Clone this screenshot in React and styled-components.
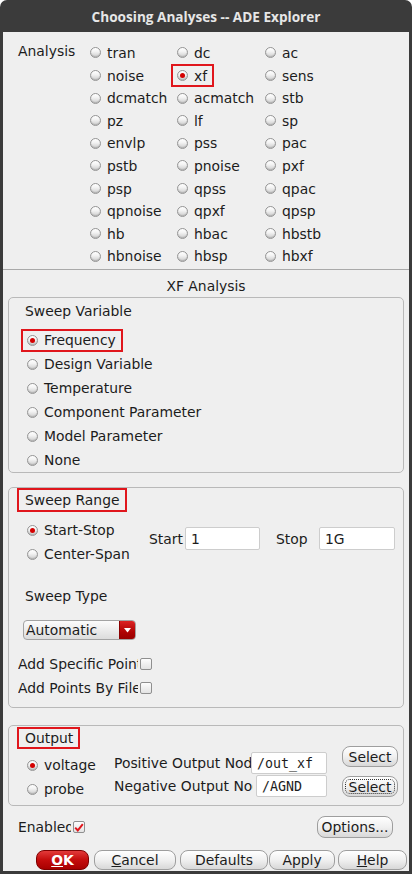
import React from "react";
import styled, { createGlobalStyle } from "styled-components";

const GlobalStyle = createGlobalStyle`
  html, body { margin: 0; padding: 0; background: #ffffff; }
  body { font-family: "DejaVu Sans", "Liberation Sans", sans-serif; }
  *, *::before, *::after { box-sizing: border-box; }
`;

const RED = "#e0161c";

const Window = styled.div`
  width: 412px;
  height: 874px;
  background: #3b3b3b;
  border-radius: 7px 7px 0 0;
  padding: 0 3px 3px 3px;
  display: flex;
  flex-direction: column;
`;

const TitleBar = styled.div`
  height: 32px;
  flex: none;
  display: flex;
  align-items: center;
  justify-content: center;
  padding-top: 1px;
  color: #e6e6e6;
  font-family: "Open Sans", "DejaVu Sans", sans-serif;
  font-weight: 700;
  font-size: 13.6px;
`;

const Body = styled.div`
  flex: 1;
  background: #efefef;
  display: flex;
  flex-direction: column;
  color: #1c1c1c;
  font-size: 13.9px;
`;

const AnalysisSection = styled.div`
  flex: none;
  height: 237px;
  display: flex;
  padding: 9.7px 0 0 15px;
`;

const SideLabel = styled.div`
  width: 66px;
  line-height: 22.6px;
  margin-top: -2px;
`;

const AnalysisGrid = styled.div`
  display: grid;
  grid-template-columns: 87px 88px 1fr;
  grid-auto-rows: 22.6px;
  align-items: center;
`;

const Separator = styled.div`
  flex: none;
  height: 1px;
  background: #a9a9a9;
`;

const SectionHeader = styled.div`
  flex: none;
  height: 27px;
  padding-top: 6px;
  line-height: 20px;
  text-align: center;
`;

const Group = styled.div`
  flex: none;
  margin: ${(p) => p.$mt || 0}px 5px 0 5px;
  height: ${(p) => p.$h}px;
  border: 1px solid #b9b9b9;
  border-radius: 5px;
  display: flex;
  flex-direction: column;
`;

const GroupTitle = styled.div`
  align-self: flex-start;
  height: ${(p) => p.$h}px;
  margin: ${(p) => p.$mt || 0}px 0 0 8px;
  padding: 0 5px 0 6px;
  display: flex;
  align-items: center;
  border: 2px solid ${(p) => (p.$marked ? RED : "transparent")};
`;

const Option = styled.label`
  justify-self: start;
  align-self: center;
  height: 23px;
  display: inline-flex;
  align-items: center;
  gap: 6px;
  padding: 0 5px 0 4px;
  white-space: nowrap;
  border: 2px solid ${(p) => (p.$marked ? RED : "transparent")};
`;

const RadioDot = styled.span`
  flex: none;
  width: 11px;
  height: 11px;
  border-radius: 50%;
  border: 1px solid #959595;
  background: linear-gradient(#ffffff, #f3f3f3 40%, #cdcdcd);
  box-shadow: inset 0 -1px 1px rgba(0, 0, 0, 0.15);
  display: flex;
  align-items: center;
  justify-content: center;
  &::after {
    content: "";
    width: 5px;
    height: 5px;
    border-radius: 50%;
    background: ${(p) => (p.$checked ? "#d40000" : "transparent")};
  }
`;

const RadioList = styled.div`
  margin: ${(p) => p.$mt || 0}px 0 0 12px;
  width: ${(p) => (p.$w ? `${p.$w}px` : "auto")};
  flex: none;
  display: flex;
  flex-direction: column;
`;

const ListRow = styled.div`
  height: 24px;
  display: flex;
  align-items: center;
`;

const Row = styled.div`
  flex: none;
  display: flex;
  align-items: flex-start;
  margin-top: ${(p) => p.$mt || 0}px;
`;

const FieldLabel = styled.span`
  width: ${(p) => p.$w}px;
  margin-left: ${(p) => p.$ml || 0}px;
  flex: none;
  white-space: nowrap;
  overflow: hidden;
`;

const FieldPair = styled.div`
  display: flex;
  align-items: center;
  height: 23px;
  margin-top: ${(p) => p.$mt || 0}px;
`;

const TextField = styled.div`
  flex: none;
  width: ${(p) => p.$w}px;
  height: ${(p) => p.$h || 23}px;
  margin-left: ${(p) => p.$ml || 0}px;
  padding: 0 0 0 5px;
  border: 1px solid #cdcdcd;
  border-radius: 2px;
  background: #ffffff;
  color: #1c1c1c;
  display: flex;
  align-items: center;
  white-space: pre;
  overflow: hidden;
  font-family: ${(p) => (p.$mono ? '"DejaVu Sans Mono", monospace' : '"DejaVu Sans", sans-serif')};
  font-size: ${(p) => (p.$mono ? "13.3px" : "13.9px")};
`;

const PlainLabel = styled.div`
  flex: none;
  line-height: 20px;
  margin: ${(p) => p.$mt || 0}px 0 0 16px;
`;

const Combo = styled.div`
  flex: none;
  align-self: flex-start;
  display: flex;
  width: 113px;
  height: 20px;
  margin: 14px 0 0 14px;
  border: 1px solid #a3a3a3;
  border-radius: 4px;
  overflow: hidden;
  background: linear-gradient(#fcfcfc, #ececec 50%, #dcdcdc);
`;

const ComboText = styled.span`
  flex: 1;
  padding-left: 2px;
  line-height: 18px;
`;

const ComboArrow = styled.span`
  width: 16px;
  flex: none;
  display: flex;
  align-items: center;
  justify-content: center;
  background: linear-gradient(#dc2424, #b00404 60%, #9a0000);
  border-left: 1px solid #8a0000;
`;

const CheckRow = styled.div`
  flex: none;
  height: 24px;
  display: flex;
  align-items: center;
  margin: ${(p) => p.$mt || 0}px 0 0 9px;
`;

const CheckBox = styled.span`
  flex: none;
  width: 12px;
  height: 12px;
  margin-left: ${(p) => p.$ml || 0}px;
  border: 1px solid #8f8f8f;
  border-radius: 2px;
  background: linear-gradient(#fdfdfd, #e3e3e3);
  display: flex;
  align-items: center;
  justify-content: center;
`;

const NodeGrid = styled.div`
  display: flex;
  flex-direction: column;
  margin-top: 3px;
`;

const NodeRow = styled.div`
  display: flex;
  align-items: center;
  height: 22px;
  margin-top: ${(p) => p.$mt || 0}px;
`;

const ButtonStack = styled.div`
  display: flex;
  flex-direction: column;
  margin: -3px 0 0 15px;
`;

const PushButton = styled.button`
  flex: none;
  width: ${(p) => p.$w}px;
  height: ${(p) => p.$h || 20}px;
  margin: ${(p) => p.$mt || 0}px ${(p) => p.$mr || 0}px 0 ${(p) => p.$ml || 0}px;
  padding: 0;
  border: 1px solid ${(p) => (p.$primary ? "#7e0000" : "#9e9e9e")};
  border-radius: 8px;
  background: ${(p) =>
    p.$primary
      ? "linear-gradient(#e23a3a, #c40c0c 50%, #a80000)"
      : "linear-gradient(#ffffff, #f0f0f0 50%, #d8d8d8)"};
  color: ${(p) => (p.$primary ? "#ffffff" : "#1c1c1c")};
  font-family: "DejaVu Sans", sans-serif;
  font-size: 13.9px;
  font-weight: ${(p) => (p.$primary ? 700 : 400)};
  display: flex;
  align-items: center;
  justify-content: center;
  outline: ${(p) => (p.$focused ? "1px dotted #333" : "none")};
  outline-offset: -4px;
`;

const FooterRow = styled.div`
  flex: none;
  display: flex;
  align-items: center;
  height: 22px;
  margin-top: 10px;
  padding-left: 15px;
`;

const ButtonBar = styled.div`
  flex: none;
  display: flex;
  height: 20px;
  margin-top: 12px;
  padding-left: 33px;
`;

const Spacer = styled.div`
  flex: 1;
`;

function Radio({ label, checked, marked }) {
  return (
    <Option $marked={marked}>
      <RadioDot $checked={checked} />
      {label}
    </Option>
  );
}

const analyses = [
  ["tran", "dc", "ac"],
  ["noise", "xf", "sens"],
  ["dcmatch", "acmatch", "stb"],
  ["pz", "lf", "sp"],
  ["envlp", "pss", "pac"],
  ["pstb", "pnoise", "pxf"],
  ["psp", "qpss", "qpac"],
  ["qpnoise", "qpxf", "qpsp"],
  ["hb", "hbac", "hbstb"],
  ["hbnoise", "hbsp", "hbxf"],
];

const sweepVars = [
  "Frequency",
  "Design Variable",
  "Temperature",
  "Component Parameter",
  "Model Parameter",
  "None",
];

export default function App() {
  return (
    <>
      <GlobalStyle />
      <Window>
        <TitleBar>Choosing Analyses -- ADE Explorer</TitleBar>
        <Body>
          <AnalysisSection>
            <SideLabel>Analysis</SideLabel>
            <AnalysisGrid>
              {analyses.flat().map((a) => (
                <Radio key={a} label={a} checked={a === "xf"} marked={a === "xf"} />
              ))}
            </AnalysisGrid>
          </AnalysisSection>
          <Separator />
          <SectionHeader>XF Analysis</SectionHeader>

          <Group $h={176}>
            <GroupTitle $h={24} $mt={1}>Sweep Variable</GroupTitle>
            <RadioList $mt={5}>
              {sweepVars.map((v, i) => (
                <ListRow key={v}>
                  <Radio label={v} checked={i === 0} marked={i === 0} />
                </ListRow>
              ))}
            </RadioList>
          </Group>

          <Group $h={221} $mt={14}>
            <GroupTitle $h={24} $marked>Sweep Range</GroupTitle>
            <Row $mt={6}>
              <RadioList $w={128}>
                <ListRow>
                  <Radio label="Start-Stop" checked />
                </ListRow>
                <ListRow>
                  <Radio label="Center-Span" />
                </ListRow>
              </RadioList>
              <FieldPair $mt={9}>
                <FieldLabel $w={36}>Start</FieldLabel>
                <TextField $w={75}>1</TextField>
                <FieldLabel $w={43} $ml={16}>Stop</FieldLabel>
                <TextField $w={76}>1G</TextField>
              </FieldPair>
            </Row>
            <PlainLabel $mt={20}>Sweep Type</PlainLabel>
            <Combo>
              <ComboText>Automatic</ComboText>
              <ComboArrow>
                <svg width="7" height="5" viewBox="0 0 7 5">
                  <path d="M0 0 H7 L3.5 4.5 Z" fill="#ffffff" />
                </svg>
              </ComboArrow>
            </Combo>
            <CheckRow $mt={12}>
              <FieldLabel $w={120}>Add Specific Points</FieldLabel>
              <CheckBox $ml={2} />
            </CheckRow>
            <CheckRow>
              <FieldLabel $w={120}>Add Points By File</FieldLabel>
              <CheckBox $ml={2} />
            </CheckRow>
          </Group>

          <Group $h={81} $mt={17}>
            <GroupTitle $h={22} $mt={1} $marked>Output</GroupTitle>
            <Row>
              <RadioList $w={93} $mt={4}>
                <ListRow>
                  <Radio label="voltage" checked />
                </ListRow>
                <ListRow>
                  <Radio label="probe" />
                </ListRow>
              </RadioList>
              <NodeGrid>
                <NodeRow>
                  <FieldLabel $w={137}>Positive Output Node</FieldLabel>
                  <TextField $w={76} $h={22} $mono>/out_xf</TextField>
                </NodeRow>
                <NodeRow $mt={1}>
                  <FieldLabel $w={139}>Negative Output Node</FieldLabel>
                  <TextField $w={71} $h={22} $ml={3} $mono>/AGND</TextField>
                </NodeRow>
              </NodeGrid>
              <ButtonStack>
                <PushButton $w={56} $h={21}>Select</PushButton>
                <PushButton $w={56} $h={21} $mt={9} $focused>Select</PushButton>
              </ButtonStack>
            </Row>
          </Group>

          <FooterRow>
            <FieldLabel $w={53}>Enabled</FieldLabel>
            <CheckBox $ml={2}>
              <svg width="10" height="9" viewBox="0 0 10 9">
                <path d="M1.2 4.6 L3.8 7.4 L8.8 1.2" fill="none" stroke="#e0161c" strokeWidth="2" />
              </svg>
            </CheckBox>
            <Spacer />
            <PushButton $w={76} $h={22} $mr={16}>Options...</PushButton>
          </FooterRow>

          <ButtonBar>
            <PushButton $w={53} $primary>
              <u>O</u>K
            </PushButton>
            <PushButton $w={82} $ml={5}>
              <u>C</u>ancel
            </PushButton>
            <PushButton $w={88} $ml={4}>Defaults</PushButton>
            <PushButton $w={66} $ml={1}>Apply</PushButton>
            <PushButton $w={69} $ml={3}>
              <u>H</u>elp
            </PushButton>
          </ButtonBar>
        </Body>
      </Window>
    </>
  );
}
